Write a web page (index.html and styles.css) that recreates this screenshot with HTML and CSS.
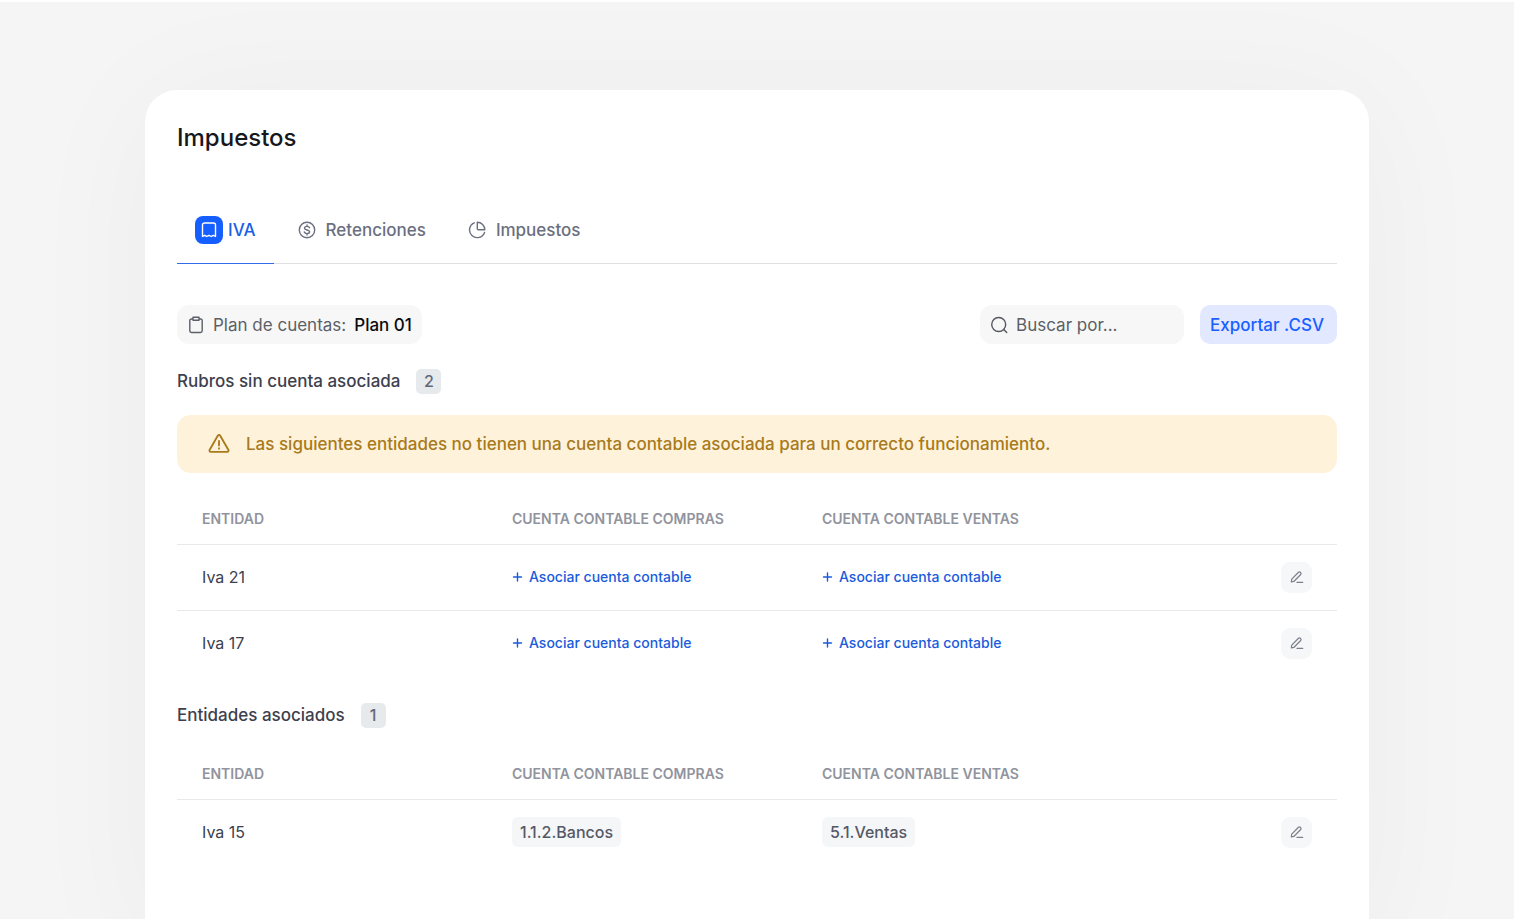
FILE: index.html
```html
<!DOCTYPE html>
<html lang="es">
<head>
<meta charset="utf-8">
<meta name="viewport" content="width=device-width, initial-scale=1">
<title>Impuestos</title>
<link rel="stylesheet" href="styles.css">
</head>
<body>
<svg class="sprite" aria-hidden="true">
  <symbol id="edit" viewBox="0 0 16 16"><path d="M1.500 13.600l.5-3.100 7.700-7.900a1.500 1.500 0 0 1 2.100 0l.4.4a1.500 1.500 0 0 1 0 2.100l-7.800 8zM8 14.200h6.500"/></symbol>
</svg>
<main class="card">
  <h1 class="title">Impuestos</h1>
  <nav class="tabs" aria-label="Secciones">
    <button class="tab tab-active" type="button">
      <span class="tab-badge"><svg class="icon" viewBox="0 0 18 18"><path d="M2.500 15.500V4a2 2 0 0 1 2-2h9a2 2 0 0 1 2 2v11.500l-2.200-1.200-2.100 1.200L9 14.300l-2.200 1.200-2.100-1.200z"/></svg></span>
      IVA
    </button>
    <button class="tab" type="button">
      <svg class="icon" viewBox="0 0 18 18"><circle cx="9" cy="9" r="7.700"/><path d="M11.500 6.800C11.200 5.900 10.200 5.400 9 5.400c-1.400 0-2.500.7-2.500 1.800C6.500 9.600 11.600 8.400 11.600 10.800c0 1.100-1.100 1.800-2.600 1.800-1.300 0-2.400-.6-2.700-1.600M9 3.900v1.500M9 12.600v1.500"/></svg>
      Retenciones
    </button>
    <button class="tab" type="button">
      <svg class="icon" viewBox="0 0 18 18"><path d="M6.200 1.800A7.700 7.700 0 1 0 16.500 11.400M9.300 1.200v6.500a1 1 0 0 0 1 1h6.500A7.500 7.500 0 0 0 9.300 1.200z"/></svg>
      Impuestos
    </button>
  </nav>

  <div class="toolbar">
    <button class="plan" type="button">
      <svg class="icon" viewBox="0 0 18 18"><path d="M6 3H4.500A1.700 1.700 0 0 0 2.800 4.700v10.100a1.700 1.700 0 0 0 1.700 1.700h9a1.700 1.700 0 0 0 1.700-1.700V4.700A1.700 1.700 0 0 0 13.500 3H12M6 1.300h6v3H6z"/></svg>
      <span class="plan-label">Plan de cuentas:</span>
      <span class="plan-value">Plan 01</span>
    </button>
    <label class="search">
      <svg class="icon" viewBox="0 0 18 18"><circle cx="8.700" cy="8.500" r="7"/><path d="M13.700 13.500l3 3"/></svg>
      <input class="search-input" type="text" placeholder="Buscar por..." aria-label="Buscar por">
    </label>
    <button class="export" type="button">Exportar .CSV</button>
  </div>

  <section>
    <div class="section-head"><h2 class="section-title">Rubros sin cuenta asociada</h2><span class="count">2</span></div>
    <div class="alert" role="alert">
      <svg class="alert-icon" viewBox="0 0 24 24"><path d="M10.800 2.700L1.700 18.500a1.400 1.400 0 0 0 1.200 2h18.200a1.400 1.400 0 0 0 1.200-2L13.200 2.700a1.400 1.400 0 0 0-2.400 0zM12 8.500v5M12 16.500v.6"/></svg>
      <span>Las siguientes entidades no tienen una cuenta contable asociada para un correcto funcionamiento.</span>
    </div>
    <table class="table">
      <thead><tr><th>ENTIDAD</th><th>CUENTA CONTABLE COMPRAS</th><th>CUENTA CONTABLE VENTAS</th><td></td></tr></thead>
      <tbody>
        <tr>
          <td>Iva 21</td>
          <td><button class="link" type="button"><svg class="plus" viewBox="0 0 10 10"><path d="M5 1v8M1 5h8"/></svg>Asociar cuenta contable</button></td>
          <td><button class="link" type="button"><svg class="plus" viewBox="0 0 10 10"><path d="M5 1v8M1 5h8"/></svg>Asociar cuenta contable</button></td>
          <td class="actions"><button class="edit" type="button" aria-label="Editar Iva 21"><svg class="edit-icon"><use href="#edit"/></svg></button></td>
        </tr>
        <tr>
          <td>Iva 17</td>
          <td><button class="link" type="button"><svg class="plus" viewBox="0 0 10 10"><path d="M5 1v8M1 5h8"/></svg>Asociar cuenta contable</button></td>
          <td><button class="link" type="button"><svg class="plus" viewBox="0 0 10 10"><path d="M5 1v8M1 5h8"/></svg>Asociar cuenta contable</button></td>
          <td class="actions"><button class="edit" type="button" aria-label="Editar Iva 17"><svg class="edit-icon"><use href="#edit"/></svg></button></td>
        </tr>
      </tbody>
    </table>
  </section>

  <section>
    <div class="section-head"><h2 class="section-title">Entidades asociados</h2><span class="count">1</span></div>
    <table class="table">
      <thead><tr><th>ENTIDAD</th><th>CUENTA CONTABLE COMPRAS</th><th>CUENTA CONTABLE VENTAS</th><td></td></tr></thead>
      <tbody>
        <tr>
          <td>Iva 15</td>
          <td><span class="chip">1.1.2.Bancos</span></td>
          <td><span class="chip">5.1.Ventas</span></td>
          <td class="actions"><button class="edit" type="button" aria-label="Editar Iva 15"><svg class="edit-icon"><use href="#edit"/></svg></button></td>
        </tr>
      </tbody>
    </table>
  </section>
</main>
</body>
</html>
```
FILE: styles.css
```css
* { box-sizing: border-box; }
html { background: #f5f5f5; }
body {
  margin: 0;
  min-height: 100vh;
  padding: 88px 145px 0;
  border-top: 2px solid #fff;
  display: flex;
  overflow-x: hidden;
  font-family: Inter, "Liberation Sans", sans-serif;
  font-size: 16px;
  line-height: 24px;
  color: #3d404d;
}
button, input { font: inherit; color: inherit; border: 0; background: none; padding: 0; margin: 0; }
button { cursor: pointer; }
svg { fill: none; stroke: currentColor; stroke-width: 1.4; stroke-linecap: round; stroke-linejoin: round; flex: none; }
.sprite { position: absolute; width: 0; height: 0; }
.icon { width: 18px; height: 18px; }
.card {
  flex: 1;
  min-width: 0;
  padding: 32px 32px 53px;
  background: #fff;
  border-radius: 32px 32px 0 0;
  box-shadow: 0 8px 140px rgba(0, 0, 0, 0.04);
}
.title { margin: 0 0 42px; font-size: 24px; line-height: 32px; font-weight: 500; color: #17181c; }
.tabs { display: flex; box-shadow: inset 0 -1px #dfe0e3; }
.tab {
  display: flex;
  align-items: center;
  gap: 10px;
  height: 68px;
  padding: 0 18px 0 24px;
  font-size: 17px;
  font-weight: 500;
  color: #6b6f80;
}
.tab-active { gap: 5px; padding-left: 18px; color: #1a5fe6; box-shadow: inset 0 -1px #2f6ce8; }
.tab-badge { display: grid; place-items: center; width: 28px; height: 28px; border-radius: 8px; background: #155eff; color: #fff; }
.toolbar { display: flex; gap: 16px; margin: 41px 0 25px; font-size: 17px; }
.plan, .search, .export { display: flex; align-items: center; height: 39px; border-radius: 12px; background: #f7f7f7; }
.plan { gap: 8px; padding: 0 10px; margin-right: auto; color: #5c5f68; }
.plan-value { color: #0b0b0d; font-weight: 500; }
.search { gap: 8px; width: 204px; padding: 0 10px; color: #55575e; }
.search-input { min-width: 0; flex: 1; outline-offset: 4px; }
.search-input::placeholder { color: #5c5f66; opacity: 1; }
.export { padding: 0 13px 0 10px; background: #e2e8ff; color: #1a5fff; font-weight: 500; border-radius: 10px; }
.section-head { display: flex; align-items: center; gap: 16px; margin-bottom: 21px; }
.section-title { margin: 0; font-size: 17px; line-height: 25px; font-weight: 500; }
.count { width: 25px; height: 25px; line-height: 25px; border-radius: 5px; background: #e7eaed; color: #62677a; text-align: center; font-weight: 500; }
.alert { display: flex; align-items: center; gap: 16px; min-height: 58px; padding: 0 31px; margin-bottom: 21px; border-radius: 14px; background: #fff2da; color: #a77a1c; font-size: 17px; font-weight: 500; }
.alert-icon { width: 22px; height: 22px; stroke-width: 2; }
.table { width: 100%; border-collapse: collapse; table-layout: fixed; margin-bottom: 27px; }
.table th, .table td { padding: 0 0 0 25px; text-align: left; vertical-align: middle; }
.table th { width: 310px; height: 50px; font-size: 14px; line-height: 20px; font-weight: 600; color: #91939d; }
.table tbody td { height: 66px; font-size: 16px; }
.table tr { border-bottom: 1px solid #e8e9eb; }
.table tbody tr:last-child { border-bottom: 0; }
.table .actions { padding-right: 25px; text-align: right; }
.link { display: flex; align-items: center; gap: 6px; font-size: 14px; font-weight: 500; color: #1a5bdc; }
.plus { width: 11px; height: 10px; }
.edit { display: inline-grid; place-items: center; width: 31px; height: 31px; border-radius: 9px; background: #f6f7f9; color: #7c7f8d; vertical-align: middle; }
.edit-icon { width: 14px; height: 14px; }
.chip { display: inline-block; padding: 3px 8px; border-radius: 6px; background: #f5f6f8; font-size: 16px; font-weight: 500; color: #555966; vertical-align: middle; }
```
